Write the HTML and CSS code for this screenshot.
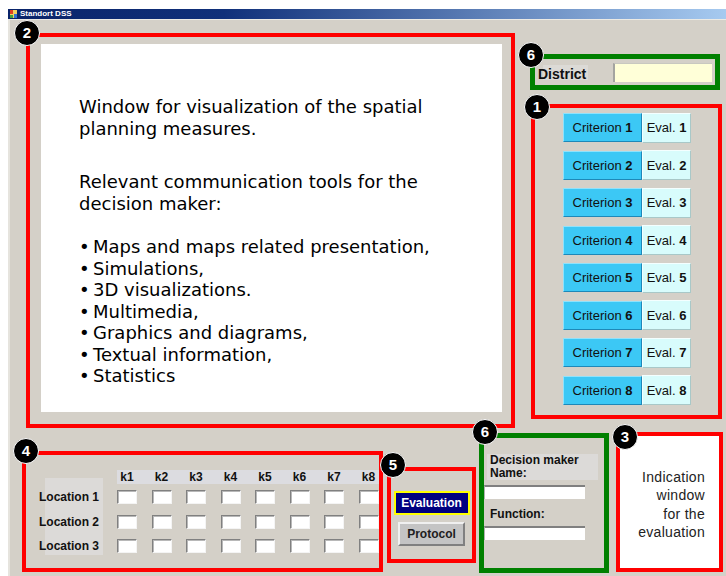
FILE: index.html
```html
<!DOCTYPE html>
<html lang="en">
<head>
<meta charset="utf-8">
<title>Standort DSS</title>
<link rel="stylesheet" href="styles.css">
</head>
<body>
<div class="window">
  <div class="titlebar">
    <svg class="app-icon" width="7" height="8" viewBox="0 0 7 8">
      <rect x="0" y="0" width="7" height="8" fill="#f0d060"/>
      <rect x="0" y="0" width="3" height="4" fill="#e04020"/>
      <rect x="4" y="4" width="3" height="4" fill="#3070d0"/>
      <rect x="0" y="5" width="3" height="3" fill="#40a040"/>
    </svg>
    <span class="title">Standort DSS</span>
  </div>

  <div class="client">
    <div class="top-row">
      <section class="frame frame-red view-frame">
        <span class="badge badge-view">2</span>
        <div class="viewport">
          <p>Window for visualization of the spatial<br>planning measures.</p>
          <p class="para-tools">Relevant communication tools for the<br>decision maker:</p>
          <ul class="tools">
            <li>Maps and maps related presentation,</li>
            <li>Simulations,</li>
            <li>3D visualizations.</li>
            <li>Multimedia,</li>
            <li>Graphics and diagrams,</li>
            <li>Textual information,</li>
            <li>Statistics</li>
          </ul>
        </div>
      </section>

      <div class="side">
        <section class="frame frame-green district-frame">
          <span class="badge badge-district">6</span>
          <span class="district-label">District</span>
          <span class="field-yellow"></span>
        </section>

        <section class="frame frame-red criteria-frame">
          <span class="badge badge-criteria">1</span>
          <div class="crit-row"><span class="btn-crit">Criterion <b>1</b></span><span class="btn-eval">Eval. <b>1</b></span></div>
          <div class="crit-row"><span class="btn-crit">Criterion <b>2</b></span><span class="btn-eval">Eval. <b>2</b></span></div>
          <div class="crit-row"><span class="btn-crit">Criterion <b>3</b></span><span class="btn-eval">Eval. <b>3</b></span></div>
          <div class="crit-row"><span class="btn-crit">Criterion <b>4</b></span><span class="btn-eval">Eval. <b>4</b></span></div>
          <div class="crit-row"><span class="btn-crit">Criterion <b>5</b></span><span class="btn-eval">Eval. <b>5</b></span></div>
          <div class="crit-row"><span class="btn-crit">Criterion <b>6</b></span><span class="btn-eval">Eval. <b>6</b></span></div>
          <div class="crit-row"><span class="btn-crit">Criterion <b>7</b></span><span class="btn-eval">Eval. <b>7</b></span></div>
          <div class="crit-row"><span class="btn-crit">Criterion <b>8</b></span><span class="btn-eval">Eval. <b>8</b></span></div>
        </section>
      </div>
    </div>

    <div class="bottom-row">
      <section class="frame frame-red matrix-frame">
        <span class="badge badge-matrix">4</span>
        <div class="mx-head">
          <span>k1</span><span>k2</span><span>k3</span><span>k4</span>
          <span>k5</span><span>k6</span><span>k7</span><span>k8</span>
        </div>
        <div class="mx-body">
          <div class="mx-labels">
            <span>Location 1</span>
            <span>Location 2</span>
            <span>Location 3</span>
          </div>
          <div class="mx-cells">
            <span class="cell"></span><span class="cell"></span><span class="cell"></span><span class="cell"></span>
            <span class="cell"></span><span class="cell"></span><span class="cell"></span><span class="cell"></span>
            <span class="cell"></span><span class="cell"></span><span class="cell"></span><span class="cell"></span>
            <span class="cell"></span><span class="cell"></span><span class="cell"></span><span class="cell"></span>
            <span class="cell"></span><span class="cell"></span><span class="cell"></span><span class="cell"></span>
            <span class="cell"></span><span class="cell"></span><span class="cell"></span><span class="cell"></span>
          </div>
        </div>
      </section>

      <section class="frame frame-red actions-frame">
        <span class="badge badge-actions">5</span>
        <span class="btn-evaluation">Evaluation</span>
        <span class="btn-protocol">Protocol</span>
      </section>

      <section class="frame frame-green maker-frame">
        <span class="badge badge-maker">6</span>
        <div class="maker-label">Decision maker<br>Name:</div>
        <span class="field-white"></span>
        <div class="maker-label function-label">Function:</div>
        <span class="field-white"></span>
      </section>

      <section class="frame frame-red result-frame">
        <span class="badge badge-result">3</span>
        <p class="result-text">Indication<br>window<br>for the<br>evaluation</p>
      </section>
    </div>
  </div>
</div>
</body>
</html>
```

FILE: styles.css
```css
* {
  box-sizing: border-box;
}

html,
body {
  margin: 0;
  padding: 0;
  width: 726px;
  height: 576px;
  overflow: hidden;
  background: #ffffff;
}

.window {
  margin: 9px 0 0 8px;
  height: 567px;
  background: #d4d0c8;
  font-family: "Liberation Sans", Arial, sans-serif;
  color: #111111;
}

/* caption bar */
.titlebar {
  height: 10px;
  display: flex;
  align-items: center;
  gap: 3px;
  padding-left: 2px;
  background: linear-gradient(90deg, #0a246a 0%, #10307a 30%, #a6caf0 100%);
}

.title {
  font: bold 8px/10px "Liberation Sans", Arial, sans-serif;
  color: #ffffff;
}

/* light bevel along the window's top and left edges */
.client {
  height: 557px;
  border-top: 1px solid #eceae4;
  border-left: 2px solid #e6e4de;
}

/* annotation frames */
.frame {
  position: relative;
  flex: none;
}

.frame-red {
  border: 4px solid #ff0000;
}

.frame-green {
  border: 5px solid #008000;
}

.badge {
  position: absolute;
  width: 26px;
  height: 26px;
  border-radius: 50%;
  background: #000000;
  border: 1px solid #ffffff;
  color: #ffffff;
  font: bold 15px/24px "Liberation Sans", Arial, sans-serif;
  text-align: center;
  z-index: 2;
}

.badge-view { left: -16px; top: -17px; }
.badge-district { left: -17px; top: -17px; }
.badge-criteria { left: -11px; top: -14px; }
.badge-matrix { left: -13px; top: -17px; }
.badge-actions { left: -11px; top: -19px; }
.badge-maker { left: -12px; top: -19px; }
.badge-result { left: -8px; top: -12px; }

/* upper area */
.top-row {
  display: flex;
  align-items: flex-start;
  padding: 13px 0 0 16px;
}

.view-frame {
  width: 489px;
  height: 395px;
  padding: 7px 9px 12px 11px;
}

.viewport {
  height: 100%;
  background: #ffffff;
  padding: 52px 0 0 38px;
  font: 18px/21.5px "DejaVu Sans", Verdana, sans-serif;
  color: #000000;
}

.viewport p {
  margin: 0;
}

.viewport .para-tools {
  margin-top: 32px;
}

.tools {
  list-style: none;
  margin: 22px 0 0;
  padding: 0;
}

.tools li::before {
  content: "\2022";
  display: inline-block;
  width: 14px;
}

.side {
  display: flex;
  flex-direction: column;
  margin-left: 15px;
}

.district-frame {
  margin-top: 21px;
  width: 190px;
  height: 36px;
  display: flex;
  align-items: center;
  padding: 0 3px;
}

.district-label {
  font: bold 14px/16px "Liberation Sans", Arial, sans-serif;
  padding: 3px 8px 0 0;
  background: linear-gradient(#dcdad6, #dcdad6) 5px 2px / 45px 15px no-repeat;
}

.field-yellow {
  margin-left: auto;
  width: 99px;
  height: 19px;
  background: #ffffd8;
  border-left: 2px solid #a4a4a0;
  border-top: 1px solid #c8c8c0;
}

.criteria-frame {
  margin: 14px 0 0 1px;
  width: 191px;
  height: 315px;
  padding: 5px 0 0 28px;
  display: flex;
  flex-direction: column;
  gap: 8.57px;
}

.crit-row {
  display: flex;
  align-items: center;
  height: 29px;
}

.btn-crit,
.btn-eval {
  display: flex;
  align-items: center;
  justify-content: center;
  font-size: 13px;
  white-space: pre;
  color: #111111;
}

.btn-crit {
  width: 79px;
  height: 29px;
  background: #3cc8f5;
  border: 1px solid;
  border-color: #90e2fb #1e88b8 #1e88b8 #90e2fb;
}

.btn-eval {
  width: 49px;
  height: 30px;
  background: #d8fcfc;
  border: 1px solid;
  border-color: #f4ffff #a8c8c8 #a8c8c8 #f4ffff;
}

/* lower area */
.bottom-row {
  display: flex;
  align-items: flex-start;
  padding-left: 12px;
}

.matrix-frame {
  margin-top: 23px;
  width: 361px;
  height: 121px;
  padding: 15px 0 0 13px;
  font-weight: bold;
  font-size: 12px;
  line-height: 14px;
}

.mx-head {
  margin-left: 78px;
  display: grid;
  grid-template-columns: repeat(8, 20px);
  column-gap: 14.5px;
  background: linear-gradient(#dcdce0, #dcdce0) -4px 0 / 270px 14px no-repeat;
}

.mx-head span {
  text-align: center;
  white-space: nowrap;
}

.mx-body {
  display: flex;
  margin-top: 6px;
}

.mx-labels {
  width: 78px;
  display: flex;
  flex-direction: column;
  gap: 10.5px;
  margin-top: -12px;
  padding-top: 12px;
  padding-bottom: 2px;
  background: linear-gradient(#dcdad8, #dcdad8) 6px 0 / 58px 100% no-repeat;
}

.mx-labels span {
  white-space: nowrap;
}

.mx-cells {
  display: grid;
  grid-template-columns: repeat(8, 20px);
  grid-template-rows: repeat(3, 14px);
  column-gap: 14.5px;
  row-gap: 10.5px;
}

.cell {
  background: #ffffff;
  border: 1px solid;
  border-color: #808080 #f4f4f4 #f4f4f4 #808080;
  box-shadow: inset 1px 1px 0 #b8b8b8;
}

.actions-frame {
  margin: 39px 0 0 4px;
  width: 89px;
  height: 96px;
  padding-top: 20px;
  display: flex;
  flex-direction: column;
  align-items: center;
  gap: 7px;
}

.btn-evaluation,
.btn-protocol {
  display: flex;
  align-items: center;
  justify-content: center;
  height: 24px;
  font: bold 12px "Liberation Sans", Arial, sans-serif;
}

.btn-evaluation {
  width: 76px;
  background: #000080;
  border: 2px solid #ffff00;
  color: #ffffff;
}

.btn-protocol {
  width: 67px;
  background: #c4c4c4;
  border: 2px solid;
  border-color: #f0f0f0 #808080 #808080 #f0f0f0;
  color: #202020;
}

.maker-frame {
  margin: 5px 0 0 3px;
  width: 130px;
  height: 140px;
  padding-top: 16px;
  display: flex;
  flex-direction: column;
  align-items: flex-start;
}

.maker-label {
  margin-left: 3px;
  padding-left: 3px;
  width: 111px;
  font: bold 12px/13px "Liberation Sans", Arial, sans-serif;
  background: #dcdad8;
}

.function-label {
  width: auto;
  margin-top: 9px;
  background: none;
}

.field-white {
  margin-top: 5px;
  width: 101px;
  height: 14px;
  background: #ffffff;
  border-top: 2px solid #808080;
  border-left: 1px solid #b0b0b0;
}

.result-frame {
  margin: 4px 0 0 7px;
  width: 107px;
  height: 140px;
  background: #ffffff;
  padding: 32px 14px 0 0;
}

.result-text {
  margin: 0;
  text-align: right;
  font: 14px/18.3px "Liberation Sans", Arial, sans-serif;
  letter-spacing: 0.3px;
  color: #222222;
}
```
